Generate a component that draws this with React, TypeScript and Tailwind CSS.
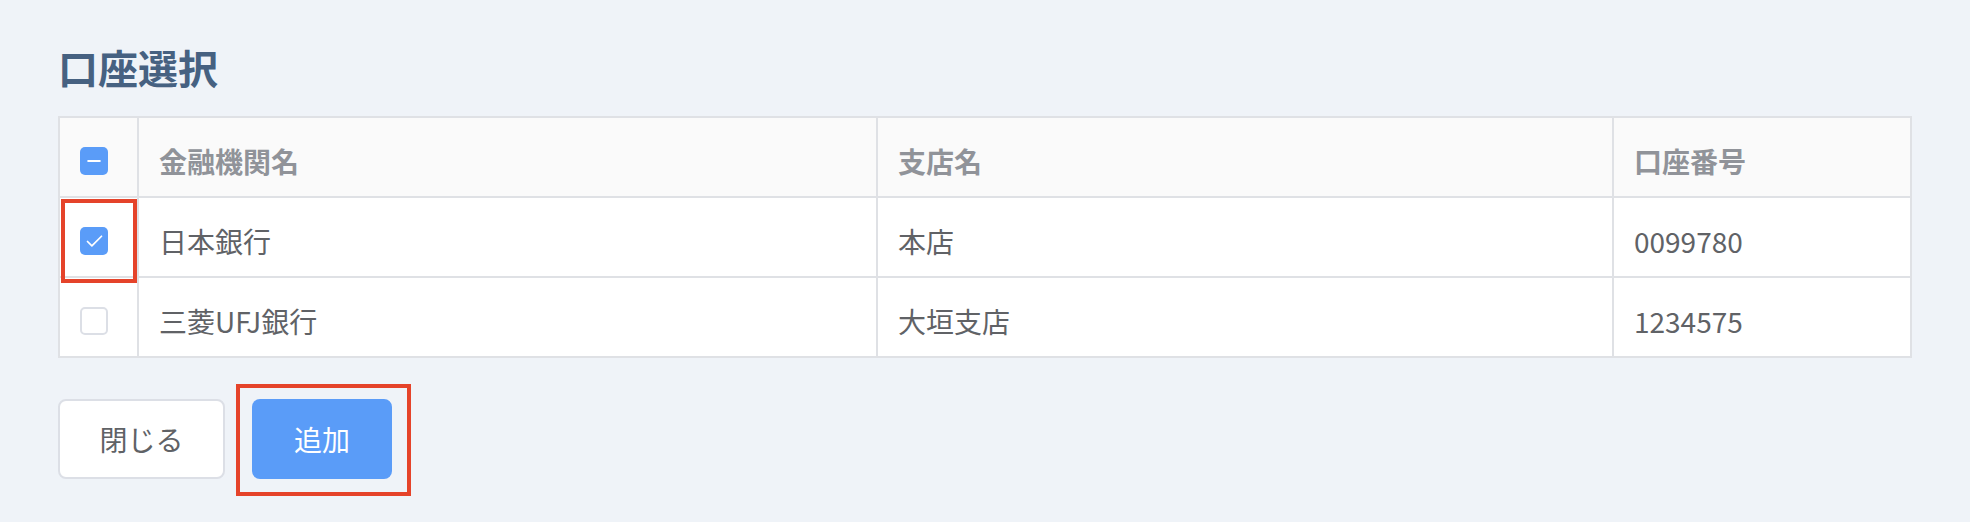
import { Check, Minus } from 'lucide-react'

const rows = [
  { checked: true, bank: '日本銀行', branch: '本店', number: '0099780', marked: true },
  { checked: false, bank: '三菱UFJ銀行', branch: '大垣支店', number: '1234575', marked: false },
]

function Box({ state }: { state: 'on' | 'off' | 'some' }) {
  if (state === 'off') {
    return <span className="mt-[8px] block h-[28px] w-[28px] rounded-[5px] border-2 border-[#dcdfe6] bg-white" />
  }
  return (
    <span className="mt-[8px] flex h-[28px] w-[28px] items-center justify-center rounded-[5px] bg-[#5a9cf8] text-white">
      {state === 'on' ? <Check size={21} strokeWidth={2} /> : <Minus size={20} strokeWidth={2.4} />}
    </span>
  )
}

export default function App() {
  return (
    <main
      className="min-h-[522px] bg-[#eff3f8] px-[58px] pt-[37px]"
      style={{ fontFamily: '"Noto Sans CJK JP", "Noto Sans", sans-serif' }}
    >
      <h1 className="text-[40px] font-bold leading-[60px] text-[#466181]">口座選択</h1>

      <div className="mt-[19px] border-2 border-[#dfe1e5] bg-white text-[28px] text-[#606266]">
        <div className="grid h-[78px] grid-cols-[77px_739px_736px_1fr] bg-[#fafafa] font-bold text-[#909399]">
          <div className="flex items-center pl-[20px]">
            <Box state="some" />
          </div>
          <div className="flex items-center border-l-2 border-[#dfe1e5] pl-[20px] pt-[8px]">金融機関名</div>
          <div className="flex items-center border-l-2 border-[#dfe1e5] pl-[20px] pt-[8px]">支店名</div>
          <div className="flex items-center border-l-2 border-[#dfe1e5] pl-[20px] pt-[8px]">口座番号</div>
        </div>
        {rows.map((r) => (
          <div
            key={r.number}
            className="grid h-[80px] grid-cols-[77px_739px_736px_1fr] border-t-2 border-[#dfe1e5]"
          >
            <div className="relative flex items-center pl-[20px]">
              <Box state={r.checked ? 'on' : 'off'} />
              {r.marked && (
                <span className="absolute left-[1px] top-[1px] z-10 h-[84px] w-[76px] border-4 border-[#e5432a]" />
              )}
            </div>
            <div className="flex items-center border-l-2 border-[#dfe1e5] pl-[20px] pt-[8px]">{r.bank}</div>
            <div className="flex items-center border-l-2 border-[#dfe1e5] pl-[20px] pt-[8px]">{r.branch}</div>
            <div className="flex items-center border-l-2 border-[#dfe1e5] pl-[20px] pt-[8px]">{r.number}</div>
          </div>
        ))}
      </div>

      <div className="mt-[41px] flex gap-[27px]">
        <button className="h-[80px] w-[167px] rounded-[8px] border-2 border-[#dcdfe6] bg-white text-[28px] text-[#606266]">
          閉じる
        </button>
        <span className="relative">
          <button className="h-[80px] w-[140px] rounded-[8px] bg-[#5a9cf8] text-[28px] text-white">追加</button>
          <span className="absolute -bottom-[17px] -left-[16px] -right-[19px] -top-[15px] border-4 border-[#e5432a]" />
        </span>
      </div>
    </main>
  )
}
